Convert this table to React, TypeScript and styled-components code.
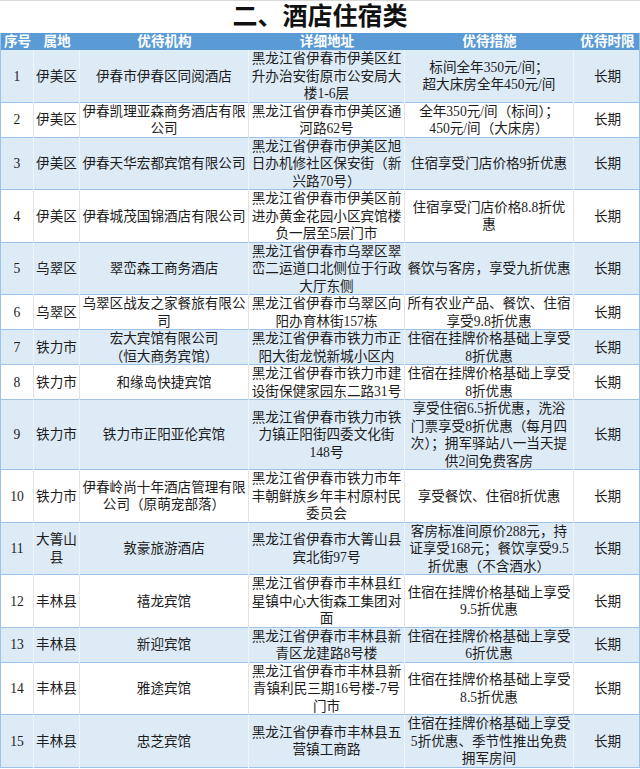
import styled, { createGlobalStyle } from "styled-components";

const GlobalStyle = createGlobalStyle`
  html, body {
    margin: 0;
    padding: 0;
    background: #ffffff;
  }
  body {
    font-family: "Liberation Serif", "Noto Sans CJK SC", serif;
  }
`;

const columns = "33px 46px 169px 156px 169px 67px";
const LINE = 17.5;

type Item = {
    no: number;
    area: string[];
    org: string[];
    addr: string[];
    offer: string[];
    term: string;
};

const items: Item[] = [
    { no: 1, area: ["伊美区"], org: ["伊春市伊春区同阅酒店"], addr: ["黑龙江省伊春市伊美区红", "升办治安街原市公安局大", "楼1-6层"], offer: ["标间全年350元/间；", "超大床房全年450元/间"], term: "长期" },
    { no: 2, area: ["伊美区"], org: ["伊春凯理亚森商务酒店有限", "公司"], addr: ["黑龙江省伊春市伊美区通", "河路62号"], offer: ["全年350元/间（标间）；", "450元/间（大床房）"], term: "长期" },
    { no: 3, area: ["伊美区"], org: ["伊春天华宏都宾馆有限公司"], addr: ["黑龙江省伊春市伊美区旭", "日办机修社区保安街（新", "兴路70号）"], offer: ["住宿享受门店价格9折优惠"], term: "长期" },
    { no: 4, area: ["伊美区"], org: ["伊春城茂国锦酒店有限公司"], addr: ["黑龙江省伊春市伊美区前", "进办黄金花园小区宾馆楼", "负一层至5层门市"], offer: ["住宿享受门店价格8.8折优", "惠"], term: "长期" },
    { no: 5, area: ["乌翠区"], org: ["翠峦森工商务酒店"], addr: ["黑龙江省伊春市乌翠区翠", "峦二运道口北侧位于行政", "大厅东侧"], offer: ["餐饮与客房，享受九折优惠"], term: "长期" },
    { no: 6, area: ["乌翠区"], org: ["乌翠区战友之家餐旅有限公", "司"], addr: ["黑龙江省伊春市乌翠区向", "阳办育林街157栋"], offer: ["所有农业产品、餐饮、住宿", "享受9.8折优惠"], term: "长期" },
    { no: 7, area: ["铁力市"], org: ["宏大宾馆有限公司", "（恒大商务宾馆）"], addr: ["黑龙江省伊春市铁力市正", "阳大街龙悦新城小区内"], offer: ["住宿在挂牌价格基础上享受", "8折优惠"], term: "长期" },
    { no: 8, area: ["铁力市"], org: ["和缘岛快捷宾馆"], addr: ["黑龙江省伊春市铁力市建", "设街保健家园东二路31号"], offer: ["住宿在挂牌价格基础上享受", "8折优惠"], term: "长期" },
    { no: 9, area: ["铁力市"], org: ["铁力市正阳亚伦宾馆"], addr: ["黑龙江省伊春市铁力市铁", "力镇正阳街四委文化街", "148号"], offer: ["享受住宿6.5折优惠，洗浴", "门票享受8折优惠（每月四", "次）；拥军驿站八一当天提", "供2间免费客房"], term: "长期" },
    { no: 10, area: ["铁力市"], org: ["伊春岭尚十年酒店管理有限", "公司（原萌宠部落）"], addr: ["黑龙江省伊春市铁力市年", "丰朝鲜族乡年丰村原村民", "委员会"], offer: ["享受餐饮、住宿8折优惠"], term: "长期" },
    { no: 11, area: ["大箐山", "县"], org: ["敦豪旅游酒店"], addr: ["黑龙江省伊春市大箐山县", "宾北街97号"], offer: ["客房标准间原价288元，持", "证享受168元；餐饮享受9.5", "折优惠（不含酒水）"], term: "长期" },
    { no: 12, area: ["丰林县"], org: ["禧龙宾馆"], addr: ["黑龙江省伊春市丰林县红", "星镇中心大街森工集团对", "面"], offer: ["住宿在挂牌价格基础上享受", "9.5折优惠"], term: "长期" },
    { no: 13, area: ["丰林县"], org: ["新迎宾馆"], addr: ["黑龙江省伊春市丰林县新", "青区龙建路8号楼"], offer: ["住宿在挂牌价格基础上享受", "6折优惠"], term: "长期" },
    { no: 14, area: ["丰林县"], org: ["雅途宾馆"], addr: ["黑龙江省伊春市丰林县新", "青镇利民三期16号楼-7号", "门市"], offer: ["住宿在挂牌价格基础上享受", "8.5折优惠"], term: "长期" },
    { no: 15, area: ["丰林县"], org: ["忠芝宾馆"], addr: ["黑龙江省伊春市丰林县五", "营镇工商路"], offer: ["住宿在挂牌价格基础上享受", "5折优惠、季节性推出免费", "拥军房间"], term: "长期" },
];

const heads = ["序号", "属地", "优待机构", "详细地址", "优待措施", "优待时限"];

const Page = styled.div`
  width: 640px;
  background: #ffffff;
`;

// a Latin primary font keeps the line box short; the CJK glyphs come from Noto
const Title = styled.h1`
  margin: 0;
  height: 33px;
  box-sizing: border-box;
  border-top: 1px solid #d9d9d9;
  text-align: center;
  font-family: "Liberation Serif", "Noto Sans CJK SC", serif;
  font-size: 25px;
  line-height: 31px;
  font-weight: 700;
  color: #111111;
`;

const Table = styled.div`
  border-left: 1px solid #9dc3e6;
  border-right: 1px solid #9dc3e6;
  box-sizing: border-box;
`;

const HeaderRow = styled.div`
  display: grid;
  grid-template-columns: ${columns};
  height: 17px;
  background: #5b9bd5;
`;

const HeadCell = styled.div`
  display: flex;
  align-items: center;
  justify-content: center;
  font-family: "Liberation Sans", "Noto Sans CJK SC", sans-serif;
  font-size: 13.6px;
  font-weight: 700;
  line-height: 17px;
  color: #ffffff;
  white-space: nowrap;
`;

const Row = styled.div<{ $lines: number; $alt: boolean }>`
  display: grid;
  grid-template-columns: ${columns};
  height: ${(p) => p.$lines * LINE}px;
  box-sizing: border-box;
  border-bottom: 1px solid #9dc3e6;
  background: ${(p) => (p.$alt ? "#ddebf7" : "#ffffff")};
`;

const Cell = styled.div<{ $alt: boolean }>`
  display: flex;
  align-items: center;
  justify-content: center;
  text-align: center;
  font-size: 13.6px;
  line-height: ${LINE}px;
  color: #1c1c1c;
  white-space: nowrap;
  overflow: visible;
  border-right: 1px solid ${(p) => (p.$alt ? "#eef5fc" : "#e3e3e3")};

  &:last-child {
    border-right: none;
  }
`;

const Lines = ({ lines }: { lines: string[] }) => (
    <span>
        {lines.map((line, i) => (
            <span key={i}>
                {i > 0 && <br />}
                {line}
            </span>
        ))}
    </span>
);

export default function App() {
    return (
        <Page>
            <GlobalStyle />
            <Title>二、酒店住宿类</Title>
            <Table>
                <HeaderRow>
                    {heads.map((h) => (
                        <HeadCell key={h}>{h}</HeadCell>
                    ))}
                </HeaderRow>
                {items.map((item, index) => {
                    const alt = index % 2 === 0;
                    const lines = Math.max(item.area.length, item.org.length, item.addr.length, item.offer.length, 2);
                    return (
                        <Row key={item.no} $lines={lines} $alt={alt}>
                            <Cell $alt={alt}>{item.no}</Cell>
                            <Cell $alt={alt}><Lines lines={item.area} /></Cell>
                            <Cell $alt={alt}><Lines lines={item.org} /></Cell>
                            <Cell $alt={alt}><Lines lines={item.addr} /></Cell>
                            <Cell $alt={alt}><Lines lines={item.offer} /></Cell>
                            <Cell $alt={alt}>{item.term}</Cell>
                        </Row>
                    );
                })}
            </Table>
        </Page>
    );
}
